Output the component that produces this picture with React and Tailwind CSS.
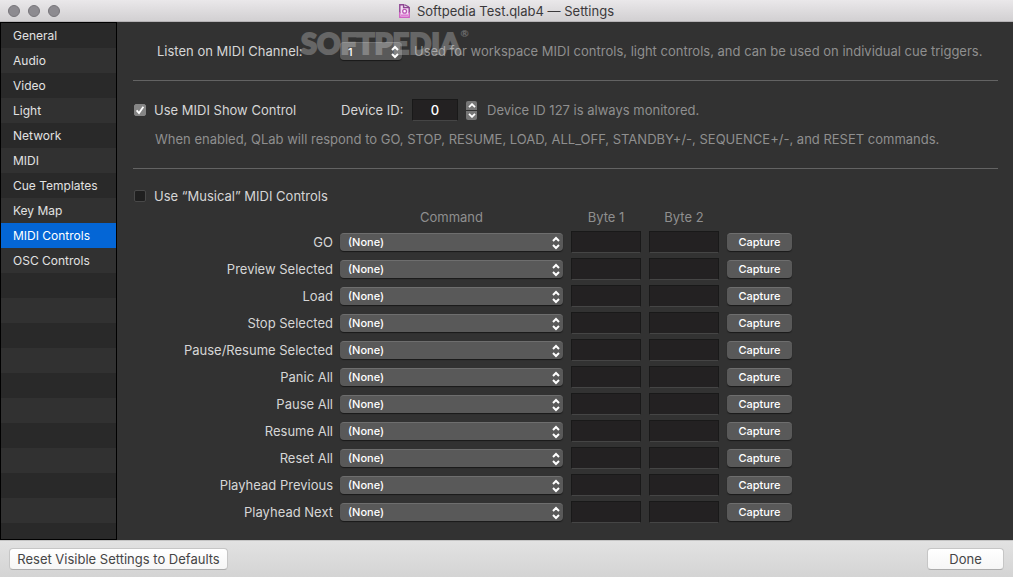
import React, { useState } from 'react';

const sections = [
    'General', 'Audio', 'Video', 'Light', 'Network',
    'MIDI', 'Cue Templates', 'Key Map', 'MIDI Controls', 'OSC Controls',
];

const controls = [
    'GO', 'Preview Selected', 'Load', 'Stop Selected', 'Pause/Resume Selected', 'Panic All',
    'Pause All', 'Resume All', 'Reset All', 'Playhead Previous', 'Playhead Next',
];

const PopUp = ({ id, label, options, className }) => (
    <div className={`relative ${className}`}>
        <select
            id={id}
            aria-label={label}
            className="block w-full h-[18px] pl-2 pr-5 appearance-none rounded bg-[#595959] border-t border-[#6e6e6e] shadow-[0_1px_1px_rgba(0,0,0,0.5)] text-[11px] leading-4 font-medium text-white focus:outline-none"
        >
            {options.map(option => <option key={option}>{option}</option>)}
        </select>
        <svg viewBox="0 0 8 14" className="absolute right-[3px] top-[3px] w-2 h-3.5 pointer-events-none" fill="none" stroke="#fff" strokeWidth="2">
            <path d="M1 5 L4 2 L7 5" />
            <path d="M1 9 L4 12 L7 9" />
        </svg>
    </div>
);

const DocumentIcon = () => (
    <svg viewBox="0 0 11 14" className="w-[11px] h-3.5" fill="none">
        <path d="M0.8 0.8 H4.5 V3.4 H10.2 V13.2 H0.8 Z" fill="#f3dcf2" />
        <path d="M0.8 9 V0.8 H4.6 V3.6 H10.2 V9" stroke="#8d4592" strokeWidth="1.4" />
        <path d="M5.6 0.8 L10 3" stroke="#8d4592" strokeWidth="1.2" />
        <path d="M0.8 8 V13.2 H10.2 V8" stroke="#cf5fc4" strokeWidth="1.4" />
        <circle cx="5.6" cy="7.2" r="1.9" fill="#fff" stroke="#bb55b4" strokeWidth="1.3" />
        <path d="M2 11.3 H9" stroke="#de7fd4" strokeWidth="1.8" />
    </svg>
);

const TitleBar = () => (
    <header className="h-[22px] shrink-0 grid grid-cols-[1fr_auto_1fr] items-center px-2 bg-linear-to-b from-[#eae8ea] to-[#d2d0d2] border-b border-[#b5b3b5]">
        <div className="flex gap-2">
            {['Close', 'Minimize', 'Zoom'].map(name => (
                <button key={name} aria-label={name} className="w-3 h-3 rounded-full bg-[#8d8b90] border border-[#77757a]" />
            ))}
        </div>
        <h1 className="flex items-center gap-[7px] text-[13px] text-[#3b393b]">
            <DocumentIcon />
            Softpedia Test.qlab4 — Settings
        </h1>
    </header>
);

const Sidebar = ({ active, onSelect }) => (
    <nav className="w-[117px] shrink-0 border border-black bg-[repeating-linear-gradient(#292929_0_25px,#313131_25px_50px)]">
        {sections.map(name => (
            <button
                key={name}
                onClick={() => onSelect(name)}
                className={`block w-full h-[25px] pl-3 text-left text-[12px] ${name === active ? 'bg-[#0466d6] text-white' : 'text-[#e2e2e2]'}`}
            >
                {name}
            </button>
        ))}
    </nav>
);

const ShowControl = () => {
    const [enabled, setEnabled] = useState(true);
    const [deviceId, setDeviceId] = useState(0);

    const step = (amount) => setDeviceId(Math.min(127, Math.max(0, Number(deviceId) + amount)));

    return (
        <section className="pt-[17px] pb-[19px] border-b border-[#636363]">
            <div className="flex items-center h-6">
                <label className="flex items-center w-[208px] gap-2 whitespace-nowrap">
                    <span className="relative w-[13px] h-3">
                        <input
                            type="checkbox"
                            checked={enabled}
                            onChange={(e) => setEnabled(e.target.checked)}
                            className="peer block w-3 h-3 ml-px appearance-none rounded-xs bg-[#1f1f1f] border border-[#484848] checked:bg-[#858585] checked:border-[#858585]"
                        />
                        <svg viewBox="0 0 12 12" className="absolute left-px top-0 w-3 h-3 hidden peer-checked:block pointer-events-none" fill="none" stroke="#fff" strokeWidth="1.8">
                            <path d="M2.6 6.4 L5 9 L9.4 2.8" />
                        </svg>
                    </span>
                    Use MIDI Show Control
                </label>
                <label htmlFor="device-id" className="w-[71px] whitespace-nowrap">Device ID:</label>
                <input
                    id="device-id"
                    value={deviceId}
                    onChange={(e) => setDeviceId(e.target.value)}
                    className="w-[46px] h-[22px] bg-[#232122] border border-[#191919] border-b-[#454545] text-center font-medium text-white focus:outline-none"
                />
                <div className="flex flex-col gap-px mx-2">
                    <button aria-label="Increase device ID" onClick={() => step(1)} className="flex items-center justify-center w-[11px] h-[9px] rounded-t-xs bg-[#767676]">
                        <svg viewBox="0 0 8 5" className="w-2 h-[5px]" fill="none" stroke="#fff" strokeWidth="1.8"><path d="M1 4.2 L4 1.2 L7 4.2" /></svg>
                    </button>
                    <button aria-label="Decrease device ID" onClick={() => step(-1)} className="flex items-center justify-center w-[11px] h-[9px] rounded-b-xs bg-[#767676]">
                        <svg viewBox="0 0 8 5" className="w-2 h-[5px]" fill="none" stroke="#fff" strokeWidth="1.8"><path d="M1 0.8 L4 3.8 L7 0.8" /></svg>
                    </button>
                </div>
                <span className="pl-0.5 text-[#8f8f8f]">Device ID 127 is always monitored.</span>
            </div>
            <p className="mt-[7px] pl-[22px] text-[#8f8f8f]">
                When enabled, QLab will respond to GO, STOP, RESUME, LOAD, ALL_OFF, STANDBY+/-, SEQUENCE+/-, and RESET commands.
            </p>
        </section>
    );
};

const MusicalControls = () => (
    <section className="pt-[17px]">
        <label className="flex items-center gap-2 h-5 w-fit">
            <input type="checkbox" className="w-3 h-3 ml-px appearance-none rounded-xs bg-[#1f1f1f] border border-[#484848] checked:bg-[#858585]" />
            Use “Musical” MIDI Controls
        </label>
        <table className="table-fixed w-[659px] border-collapse">
            <colgroup>
                <col className="w-[207px]" />
                <col className="w-[231px]" />
                <col className="w-[78px]" />
                <col className="w-[78px]" />
                <col />
            </colgroup>
            <thead>
                <tr className="h-[22px] text-[#8f8f8f]">
                    <td />
                    <th className="p-0 pr-2 font-normal">Command</th>
                    <th className="p-0 pr-2 font-normal">Byte 1</th>
                    <th className="p-0 pr-2 font-normal">Byte 2</th>
                    <td />
                </tr>
            </thead>
            <tbody>
                {controls.map(name => (
                    <tr key={name} className="h-[27px]">
                        <th className="p-0 pr-[7px] text-right font-normal whitespace-nowrap">{name}</th>
                        <td className="p-0 pr-2">
                            <PopUp label={`${name} command`} options={['(None)', 'Note On', 'Note Off', 'Program Change', 'Control Change']} className="w-full" />
                        </td>
                        {['Byte 1', 'Byte 2'].map(byte => (
                            <td key={byte} className="p-0 pr-2">
                                <input aria-label={`${name} ${byte}`} className="block w-full h-[22px] px-1 bg-[#232122] border border-[#191919] border-b-[#454545] text-white focus:outline-none" />
                            </td>
                        ))}
                        <td className="p-0">
                            <button className="block w-full h-[18px] rounded bg-[#595959] border-t border-[#6e6e6e] shadow-[0_1px_1px_rgba(0,0,0,0.5)] text-[11px] leading-4 font-medium text-white">
                                Capture
                            </button>
                        </td>
                    </tr>
                ))}
            </tbody>
        </table>
    </section>
);

const App = () => {
    const [active, setActive] = useState('MIDI Controls');

    return (
        <div className="min-h-screen flex flex-col bg-[#323232] font-['Inter','Liberation_Sans',sans-serif] text-[13px] leading-5">
            <TitleBar />
            <div className="flex flex-1">
                <Sidebar active={active} onSelect={setActive} />
                <main className="flex-1 pl-4 pr-[15px] text-[#d6d6d6]">
                    <section className="relative flex items-center h-[59px] border-b border-[#636363]">
                        <label htmlFor="midi-channel" className="w-[207px] pl-6 whitespace-nowrap">Listen on MIDI Channel:</label>
                        <PopUp id="midi-channel" options={['1', '2', '3', '4']} className="w-[62px]" />
                        <span className="pl-3 whitespace-nowrap text-[#8f8f8f]">
                            Used for workspace MIDI controls, light controls, and can be used on individual cue triggers.
                        </span>
                        <div className="absolute left-[168px] top-[3px] flex font-['Lato',sans-serif] text-[29px] leading-9 font-black text-white opacity-25 pointer-events-none">
                            <span className="[-webkit-text-stroke:2px_white]">SOFTPEDIA</span>
                            <span className="text-[10px] leading-4">®</span>
                        </div>
                    </section>
                    <ShowControl />
                    <MusicalControls />
                </main>
            </div>
            <footer className="h-[37px] shrink-0 flex items-center justify-between px-[9px] pb-px bg-linear-to-b from-[#e2e2e2] to-[#d4d4d4] border-t border-[#c4c4c4] text-[#454545]">
                <button className="h-[22px] w-[219px] rounded bg-linear-to-b from-white to-[#f6f6f6] border border-[#c6c6c6] border-b-[#acacac] leading-5">Reset Visible Settings to Defaults</button>
                <button className="h-[22px] w-[77px] rounded bg-linear-to-b from-white to-[#f6f6f6] border border-[#c6c6c6] border-b-[#acacac] leading-5">Done</button>
            </footer>
        </div>
    );
};

export default App;
